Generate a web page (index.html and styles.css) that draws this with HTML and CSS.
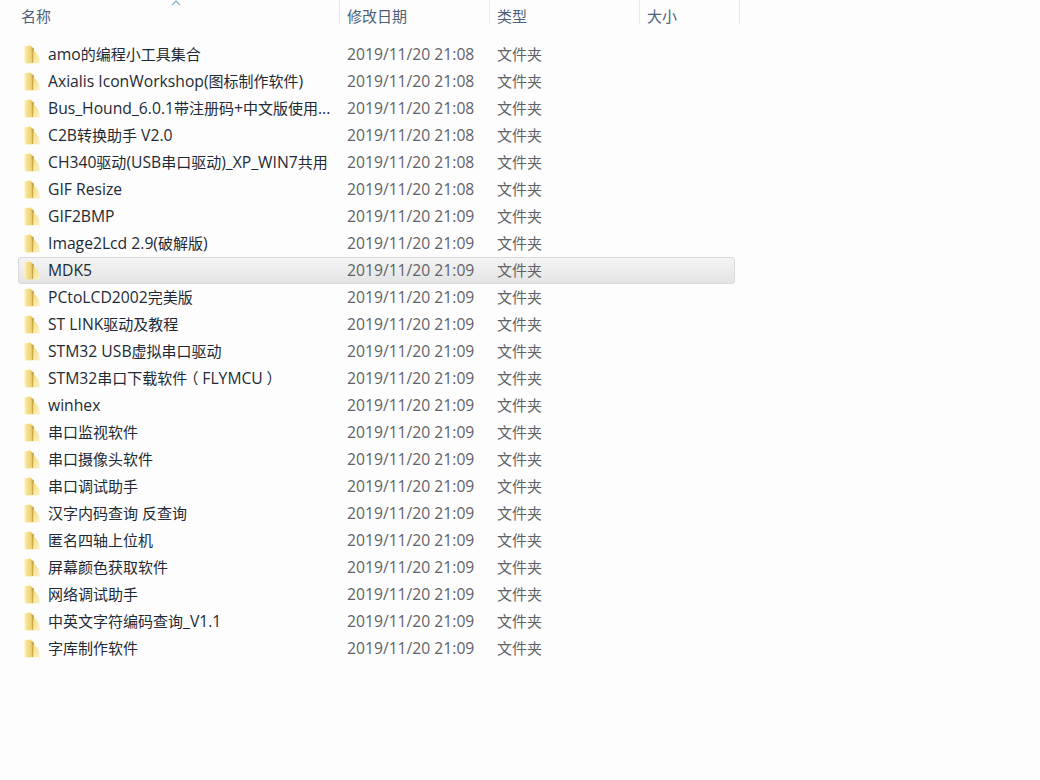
FILE: index.html
```html
<!DOCTYPE html>
<html>
<head>
  <title>文件夹</title>
  <link rel="stylesheet" href="styles.css">
</head>
<body>
  <svg class="defs" width="0" height="0">
    <defs>
      <linearGradient id="folder-left" x1="0" y1="0" x2="1" y2="0">
        <stop offset="0" stop-color="#fef6c8"/>
        <stop offset="0.35" stop-color="#f6e08e"/>
        <stop offset="1" stop-color="#edd070"/>
      </linearGradient>
      <linearGradient id="folder-seam" x1="0" y1="0" x2="1" y2="0">
        <stop offset="0" stop-color="#e2c05c"/>
        <stop offset="0.6" stop-color="#c4a03c"/>
        <stop offset="1" stop-color="#e0c060"/>
      </linearGradient>
      <linearGradient id="folder-right" x1="0" y1="0" x2="1" y2="1">
        <stop offset="0" stop-color="#f3da84"/>
        <stop offset="1" stop-color="#fef5c6"/>
      </linearGradient>
      <symbol id="folder" viewBox="0 0 18 20">
        <path d="M1.2 1.2 L8 .6 L9.5 18.2 L3 18.4 Q1.6 18.4 1.5 17 Z" fill="url(#folder-left)"/>
        <path d="M8 1.5 L11 3.5 L11.5 18 L9 18 Z" fill="url(#folder-seam)"/>
        <path d="M10.5 5.5 C13.5 7.5 15.4 10 16.2 13 L17.2 18.2 L10 18.6 Z" fill="url(#folder-right)"/>
      </symbol>
    </defs>
  </svg>

  <div class="header">
    <div class="col col-name">名称</div>
    <div class="col col-date">修改日期</div>
    <div class="col col-type">类型</div>
    <div class="col col-size">大小</div>
    <svg class="sort-arrow" width="10" height="6" viewBox="0 0 10 6"><path d="M1 5 L5 1 L9 5" fill="none" stroke="#8fb4cf" stroke-width="1.4"/></svg>
  </div>

  <div class="list">
    <div class="row"><svg class="icon"><use href="#folder"/></svg><div class="name"><span class="en">amo</span>的编程小工具集合</div><div class="date">2019/11/20 21:08</div><div class="type">文件夹</div></div>
    <div class="row"><svg class="icon"><use href="#folder"/></svg><div class="name"><span class="en">Axialis IconWorkshop(</span>图标制作软件<span class="en">)</span></div><div class="date">2019/11/20 21:08</div><div class="type">文件夹</div></div>
    <div class="row"><svg class="icon"><use href="#folder"/></svg><div class="name"><span class="en">Bus_Hound_6.0.1</span>带注册码<span class="en">+</span>中文版使用<span class="en">...</span></div><div class="date">2019/11/20 21:08</div><div class="type">文件夹</div></div>
    <div class="row"><svg class="icon"><use href="#folder"/></svg><div class="name"><span class="en">C2B</span>转换助手<span class="en"> V2.0</span></div><div class="date">2019/11/20 21:08</div><div class="type">文件夹</div></div>
    <div class="row"><svg class="icon"><use href="#folder"/></svg><div class="name"><span class="en">CH340</span>驱动<span class="en">(USB</span>串口驱动<span class="en">)_XP_WIN7</span>共用</div><div class="date">2019/11/20 21:08</div><div class="type">文件夹</div></div>
    <div class="row"><svg class="icon"><use href="#folder"/></svg><div class="name"><span class="en">GIF Resize</span></div><div class="date">2019/11/20 21:08</div><div class="type">文件夹</div></div>
    <div class="row"><svg class="icon"><use href="#folder"/></svg><div class="name"><span class="en">GIF2BMP</span></div><div class="date">2019/11/20 21:09</div><div class="type">文件夹</div></div>
    <div class="row"><svg class="icon"><use href="#folder"/></svg><div class="name"><span class="en">Image2Lcd 2.9(</span>破解版<span class="en">)</span></div><div class="date">2019/11/20 21:09</div><div class="type">文件夹</div></div>
    <div class="row selected"><svg class="icon"><use href="#folder"/></svg><div class="name"><span class="en">MDK5</span></div><div class="date">2019/11/20 21:09</div><div class="type">文件夹</div></div>
    <div class="row"><svg class="icon"><use href="#folder"/></svg><div class="name"><span class="en">PCtoLCD2002</span>完美版</div><div class="date">2019/11/20 21:09</div><div class="type">文件夹</div></div>
    <div class="row"><svg class="icon"><use href="#folder"/></svg><div class="name"><span class="en">ST LINK</span>驱动及教程</div><div class="date">2019/11/20 21:09</div><div class="type">文件夹</div></div>
    <div class="row"><svg class="icon"><use href="#folder"/></svg><div class="name"><span class="en">STM32 USB</span>虚拟串口驱动</div><div class="date">2019/11/20 21:09</div><div class="type">文件夹</div></div>
    <div class="row"><svg class="icon"><use href="#folder"/></svg><div class="name"><span class="en">STM32</span>串口下载软件<span class="paren">（</span><span class="en">FLYMCU</span><span class="paren">）</span></div><div class="date">2019/11/20 21:09</div><div class="type">文件夹</div></div>
    <div class="row"><svg class="icon"><use href="#folder"/></svg><div class="name"><span class="en">winhex</span></div><div class="date">2019/11/20 21:09</div><div class="type">文件夹</div></div>
    <div class="row"><svg class="icon"><use href="#folder"/></svg><div class="name">串口监视软件</div><div class="date">2019/11/20 21:09</div><div class="type">文件夹</div></div>
    <div class="row"><svg class="icon"><use href="#folder"/></svg><div class="name">串口摄像头软件</div><div class="date">2019/11/20 21:09</div><div class="type">文件夹</div></div>
    <div class="row"><svg class="icon"><use href="#folder"/></svg><div class="name">串口调试助手</div><div class="date">2019/11/20 21:09</div><div class="type">文件夹</div></div>
    <div class="row"><svg class="icon"><use href="#folder"/></svg><div class="name">汉字内码查询 反查询</div><div class="date">2019/11/20 21:09</div><div class="type">文件夹</div></div>
    <div class="row"><svg class="icon"><use href="#folder"/></svg><div class="name">匿名四轴上位机</div><div class="date">2019/11/20 21:09</div><div class="type">文件夹</div></div>
    <div class="row"><svg class="icon"><use href="#folder"/></svg><div class="name">屏幕颜色获取软件</div><div class="date">2019/11/20 21:09</div><div class="type">文件夹</div></div>
    <div class="row"><svg class="icon"><use href="#folder"/></svg><div class="name">网络调试助手</div><div class="date">2019/11/20 21:09</div><div class="type">文件夹</div></div>
    <div class="row"><svg class="icon"><use href="#folder"/></svg><div class="name">中英文字符编码查询<span class="en">_V1.1</span></div><div class="date">2019/11/20 21:09</div><div class="type">文件夹</div></div>
    <div class="row"><svg class="icon"><use href="#folder"/></svg><div class="name">字库制作软件</div><div class="date">2019/11/20 21:09</div><div class="type">文件夹</div></div>
  </div>
</body>
</html>
```
FILE: styles.css
```css
html, body {
  margin: 0;
  height: 100%;
}

body {
  background-color: #fdfdfd;
  font-family: "Open Sans", "Noto Sans CJK SC", sans-serif;
  font-size: 15px;
  color: #1e2a35;
  overflow: hidden;
}

.defs {
  position: absolute;
}

/* Column headers */
.header {
  position: relative;
  display: flex;
  height: 24px;
  color: #4c607a;
  line-height: 32px;
}

.col {
  box-sizing: border-box;
  border-right: 1px solid #e6e9ee;
  padding-left: 7px;
}

.col-name {
  width: 340px;
  padding-left: 21px;
}

.col-date,
.col-type {
  width: 150px;
}

.col-size {
  width: 100px;
}

.sort-arrow {
  position: absolute;
  left: 171px;
  top: 0;
}

/* File rows */
.list {
  margin-top: 17px;
  margin-left: 18px;
  width: 717px;
}

.row {
  box-sizing: border-box;
  display: flex;
  align-items: center;
  height: 27px;
}

.row.selected {
  border: 1px solid #d9d9d9;
  border-radius: 3px;
  background: linear-gradient(#f4f4f4, #e4e4e4);
}

.icon {
  width: 18px;
  height: 20px;
  margin-left: 5px;
  flex: none;
}

.selected .icon {
  margin-left: 4px;
}

.name {
  width: 299px;
  margin-bottom: 2px;
  padding-left: 7px;
  white-space: nowrap;
  overflow: hidden;
}

/* latin runs sit a little wider than the chinese ones */
.en {
  font-size: 15.7px;
}

/* full width brackets, glyph centred in its em box */
.paren {
  font-feature-settings: "halt";
  padding: 0 3.75px;
}

.date {
  width: 150px;
  margin-bottom: 2px;
  font-size: 15.7px;
  color: #5f6368;
}

.type {
  margin-bottom: 2px;
  color: #5f6368;
}
```
